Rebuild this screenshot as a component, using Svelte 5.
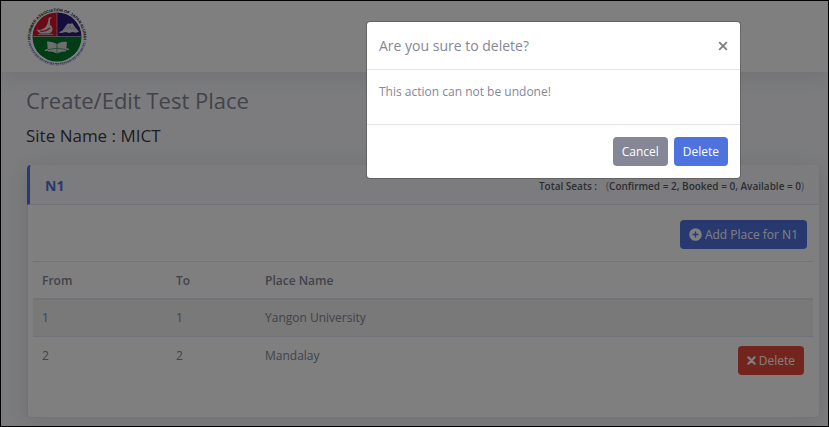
<script>
  const site = 'MICT';
  const hall = 'N1';
  const seats = { confirmed: 2, booked: 0, available: 0 };
  const places = [
    { from: 1, to: 1, name: 'Yangon University', removable: false },
    { from: 2, to: 2, name: 'Mandalay', removable: true }
  ];
  let open = $state(true);
  const close = () => (open = false);
  const ask = () => (open = true);
</script>

<div class="page">
  <header class="topbar">
    <svg class="logo" viewBox="0 0 64 64" role="img" aria-label="Myanmar Association of Japan Alumni">
      <defs>
        <path id="ring-top" d="M6 38 A26.500 26.500 0 1 1 58 38" />
        <clipPath id="disc"><circle cx="32" cy="32" r="24.500" /></clipPath>
      </defs>
      <g clip-path="url(#disc)">
        <rect x="7" y="7" width="25" height="25" fill="#d4142c" />
        <rect x="32" y="7" width="25" height="25" fill="#2c1a7c" />
        <rect x="7" y="31.500" width="50" height="26" fill="#007a2c" />
        <path d="M32 7v25M7 31.500h50" stroke="#d8d8d8" stroke-width=".6" />
      </g>
      <path d="M23.500 13q2.500-1.500 3.500.3l-2 .6q.3 3-.2 5.600 2.700 1.500 2.700 4.500 0 3-3.500 4.500h-8q-3-1-4.500-4 5 1.500 8.500-2 3.500-3.500 3.500-9.500z" fill="#ddd" />
      <path d="M15 26q5 1.500 10-3" fill="none" stroke="#d4142c" stroke-width="1.200" />
      <path d="M13 29.300h15" stroke="#ddd" stroke-width=".8" />
      <path d="M33.500 27.500l4-2 3.500-5 2-2 2.500.3 2-.5 2.500 4 4 4.200-3 1.200-3.500-.7-3.500 1-3.500-1-4 1z" fill="#ddd" />
      <path d="M39 25l3-3.500 1 3 2-4 1 4 2-2 2 3" fill="none" stroke="#8d86b0" stroke-width=".5" />
      <path d="M22 36.500q5-.5 10 2.500 5-3 10-2l-1 9.500q-5-.5-9 2-4-2.500-9-2z" fill="#ddd" />
      <path d="M20 45.500q12-4 24-1" fill="none" stroke="#ddd" stroke-width="1.500" />
      <path d="M32 39v10M23 44.500q9-2.500 18 0" fill="none" stroke="#007a2c" stroke-width=".6" />
      <text class="motto"><textPath href="#ring-top" startOffset="50%">MYANMAR ASSOCIATION OF JAPAN ALUMNI</textPath></text>
      <path d="M4 36A28.500 28.500 0 0 0 60 36" fill="none" stroke="#a3a3d4" stroke-width="2.600" stroke-dasharray="1.200 .8 .6 .9 1.600 .7" />
      <path d="M5 38A28 28 0 0 0 59 38" fill="none" stroke="#5a5ab0" stroke-width=".8" stroke-dasharray="2 .8 1 1.100" />
    </svg>
  </header>

  <main>
    <h1>Create/Edit Test Place</h1>
    <h2>Site Name : {site}</h2>

    <section class="card">
      <div class="card-head">
        <h3>{hall}</h3>
        <p><b>Total Seats :</b><span>(<b>Confirmed = {seats.confirmed}, Booked = {seats.booked}, Available = {seats.available}</b>)</span></p>
      </div>
      <div class="card-body">
        <div class="actions">
          <button type="button" class="btn primary">
            <svg width="13" height="13" viewBox="0 0 512 512" aria-hidden="true">
              <path fill="currentColor" fill-rule="evenodd" d="M256 8a248 248 0 1 0 0 496 248 248 0 0 0 0-496zm120 264a12 12 0 0 1-12 12h-80v80a12 12 0 0 1-12 12h-32a12 12 0 0 1-12-12v-80h-80a12 12 0 0 1-12-12v-32a12 12 0 0 1 12-12h80v-80a12 12 0 0 1 12-12h32a12 12 0 0 1 12 12v80h80a12 12 0 0 1 12 12z" />
            </svg>
            Add Place for {hall}
          </button>
        </div>
        <table>
          <thead>
            <tr><th class="from">From</th><th class="to">To</th><th>Place Name</th><th class="tools" aria-label="Actions"></th></tr>
          </thead>
          <tbody>
            {#each places as place}
              <tr>
                <td>{place.from}</td>
                <td>{place.to}</td>
                <td>{place.name}</td>
                <td class="tools">
                  {#if place.removable}
                    <button type="button" class="btn danger" onclick={ask}>
                      <svg width="9" height="9" viewBox="0 0 10 10" aria-hidden="true">
                        <path d="M1.500 1.500l7 7M8.500 1.500l-7 7" stroke="currentColor" stroke-width="2.400" stroke-linecap="round" />
                      </svg>
                      Delete
                    </button>
                  {/if}
                </td>
              </tr>
            {/each}
          </tbody>
        </table>
      </div>
    </section>
  </main>

  {#if open}
    <div class="backdrop"></div>
    <div class="modal" role="dialog" aria-modal="true" aria-labelledby="ask-title">
      <div class="modal-head">
        <h4 id="ask-title">Are you sure to delete?</h4>
        <button type="button" class="close" aria-label="Close" onclick={close}>
          <svg width="10" height="10" viewBox="0 0 10 10" aria-hidden="true">
            <path d="M1.200 1.200l7.600 7.600M8.800 1.200l-7.600 7.600" stroke="currentColor" stroke-width="1.900" />
          </svg>
        </button>
      </div>
      <p class="modal-body">This action can not be undone!</p>
      <div class="modal-foot">
        <button type="button" class="btn secondary" onclick={close}>Cancel</button>
        <button type="button" class="btn primary" onclick={close}>Delete</button>
      </div>
    </div>
  {/if}
</div>

<style>
  .page, .page * { box-sizing: border-box; }
  .page {
    position: relative;
    min-height: 100vh;
    border: 1px solid #000;
    padding-bottom: 8px;
    background: #f8f9fc;
    color: #858796;
    font: 12px/20px "Segoe UI", "Open Sans", "Noto Sans", sans-serif;
    overflow: hidden;
  }
  h1, h2, h3, h4, p { margin: 0; font-weight: 400; }
  .topbar {
    display: flex;
    align-items: center;
    height: 71px;
    padding: 0 24px;
    background: #fff;
    box-shadow: 0 2px 22px rgba(58, 59, 69, .15);
  }
  .logo { width: 64px; height: 64px; overflow: visible; }
  .motto { font: 700 4px "Liberation Sans", sans-serif; fill: #111; text-anchor: middle; }
  main { padding: 12px 8px 0 25px; }
  h1 { font-size: 22px; line-height: 32px; }
  h2 { margin-top: 8px; font-size: 17px; line-height: 24px; color: #3a3b45; }
  .card {
    margin: 17px 0 0 1px;
    border: 1px solid #e3e6f0;
    border-radius: 4px;
    background: #fff;
    box-shadow: 0 2px 22px rgba(58, 59, 69, .15);
  }
  .card-head {
    display: flex;
    align-items: center;
    justify-content: space-between;
    height: 40px;
    margin: -1px 0 0 -1px;
    padding: 2px 15px 0 15px;
    border-left: 3px solid #4e73df;
    border-bottom: 1px solid #e3e6f0;
    border-radius: 4px 4px 0 0;
    background: #f8f9fc;
  }
  h3 { font-size: 14px; font-weight: 700; color: #4e73df; }
  .card-head p { display: flex; gap: 9px; font-size: 10px; }
  .card-head b { color: #5a5c69; font-weight: 600; }
  .card-body { padding: 15px 6px 42px 5px; }
  .actions { display: flex; justify-content: flex-end; padding-right: 6px; }
  .btn {
    display: inline-flex;
    align-items: center;
    gap: 3px;
    height: 29px;
    padding: 0 9px;
    border: 0;
    border-radius: 4px;
    color: #fff;
    font: inherit;
    white-space: nowrap;
    cursor: pointer;
  }
  .primary { background: #4e73df; }
  .secondary { background: #858796; }
  .danger { background: #e74a3b; }
  table { width: 100%; margin-top: 12px; border-collapse: separate; border-spacing: 0; }
  th, td { height: 37px; padding: 0 9px; border-top: 1px solid #e3e6f0; text-align: left; }
  th { height: 39px; padding-top: 2px; border-bottom: 2px solid #e3e6f0; font-weight: 600; }
  tbody tr:first-child td { height: 36px; border-top: 0; }
  tbody tr:nth-child(odd) td { background: #f2f2f2; }
  .from { width: 134px; }
  .to { width: 89px; }
  th.tools, td.tools { text-align: right; }
  td .btn { margin-top: 9px; vertical-align: top; }
  .backdrop { position: absolute; inset: 0; background: rgba(0, 0, 0, .5); }
  .modal {
    position: absolute;
    top: 20px;
    right: 87px;
    width: 375px;
    max-width: 90%;
    border: 1px solid rgba(0, 0, 0, .2);
    border-radius: 4px;
    background: #fff;
    background-clip: padding-box;
  }
  .modal-head {
    display: flex;
    align-items: center;
    justify-content: space-between;
    height: 48px;
    padding: 0 12px;
    border-bottom: 1px solid #e3e6f0;
  }
  h4 { font-size: 14px; line-height: 24px; }
  .close { display: flex; padding: 0; border: 0; background: none; color: #7f7f7f; cursor: pointer; }
  .modal-body { padding: 12px 12px 22px; }
  .modal-foot {
    display: flex;
    justify-content: flex-end;
    gap: 6px;
    padding: 12px;
    border-top: 1px solid #e3e6f0;
  }
</style>
